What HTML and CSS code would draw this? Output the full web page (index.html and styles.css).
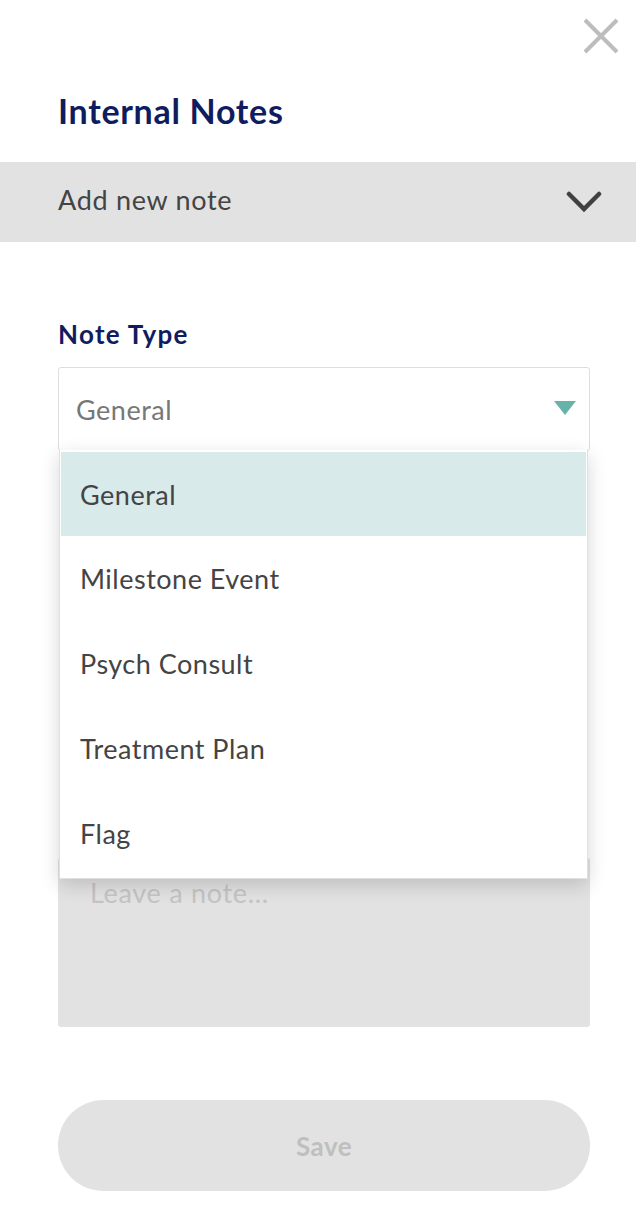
FILE: index.html
```html
<!DOCTYPE html>
<html lang="en">
<head>
<meta charset="utf-8">
<title>Internal Notes</title>
<link rel="stylesheet" href="styles.css">
</head>
<body>
<div class="panel">
  <div class="top">
    <button class="close" aria-label="Close">
      <svg width="36" height="36" viewBox="0 0 36 36"><path d="M2 2 L34 34 M34 2 L2 34" stroke="#bdbdbd" stroke-width="4" fill="none"/></svg>
    </button>
  </div>
  <h1 class="title">Internal Notes</h1>
  <div class="accordion">
    <span class="accordion-label">Add new note</span>
    <svg class="chev" width="36" height="24" viewBox="0 0 36 24"><path d="M3 4 L18 19 L33 4" stroke="#404040" stroke-width="4.5" fill="none" stroke-linecap="round" stroke-linejoin="miter"/></svg>
  </div>
  <form class="form">
    <label class="field-label">Note Type</label>
    <div class="select-wrap">
      <div class="select">
        <span class="select-value">General</span>
        <svg class="caret" width="22" height="14" viewBox="0 0 22 14"><path d="M0 0 H22 L11 14 Z" fill="#67b3aa"/></svg>
      </div>
      <ul class="menu">
        <li class="opt active">General</li>
        <li class="opt">Milestone Event</li>
        <li class="opt">Psych Consult</li>
        <li class="opt">Treatment Plan</li>
        <li class="opt">Flag</li>
      </ul>
    </div>
    <div class="textarea">Leave a note...</div>
    <button type="button" class="save">Save</button>
  </form>
</div>
</body>
</html>
```
FILE: styles.css
```css
* { box-sizing: border-box; }
html, body { margin: 0; padding: 0; background: #fff; }
body { font-family: Lato, "Open Sans", Arial, sans-serif; color: #444; width: 636px; }
.panel { display: flex; flex-direction: column; }
.top { display: flex; justify-content: flex-end; padding: 18px 17px 0 0; height: 54px; }
.close { border: 0; background: none; padding: 0; width: 36px; height: 36px; display: block; }
.close svg { display: block; }
.title { margin: 37px 0 0 58px; font-size: 34px; line-height: 40px; font-weight: 700; color: #0f1d5f; letter-spacing: 0.7px; }
.accordion { margin-top: 31px; height: 80px; background: #e2e2e2; display: flex; align-items: center; justify-content: space-between; padding: 0 34px 0 58px; }
.accordion-label { font-size: 27px; color: #444; letter-spacing: 0.7px; margin-top: -5px; }
.chev { display: block; margin-top: 0; }
.form { padding: 0 46px 0 58px; display: flex; flex-direction: column; }
.field-label { margin-top: 77px; font-size: 26px; line-height: 30px; font-weight: 700; color: #0f1d5f; letter-spacing: 1.3px; }
.select-wrap { position: relative; margin-top: 18px; }
.select { height: 84px; border: 1px solid #dedede; border-radius: 3px; display: flex; align-items: center; justify-content: space-between; padding: 0 13px 0 17px; background: #fff; }
.select-value { font-size: 27px; color: #777; letter-spacing: 0.5px; }
.caret { display: block; margin-top: -2px; }
.menu { position: absolute; left: 1px; right: 2px; top: 83px; margin: 0; padding: 2px 1px 2px 1px; list-style: none; background: #fff; border: 1px solid #e0e0e0; border-top: 0; box-shadow: 0 6px 18px rgba(0,0,0,0.16); z-index: 2; }
.opt { height: 85px; display: flex; align-items: center; padding-left: 19px; font-size: 27px; color: #444; letter-spacing: 0.5px; }
.opt.active { background: #d9eaea; height: 84px; }
.textarea { margin-top: 407px; height: 169px; background: #e2e2e2; border-radius: 3px; padding: 18px 32px; font-size: 27px; color: #c4c4c4; letter-spacing: 0.7px; }
.save { margin-top: 73px; height: 91px; border: 0; border-radius: 46px; background: #e2e2e2; color: #bfbfbf; font-family: inherit; font-size: 26px; font-weight: 700; letter-spacing: 0.5px; }
```
